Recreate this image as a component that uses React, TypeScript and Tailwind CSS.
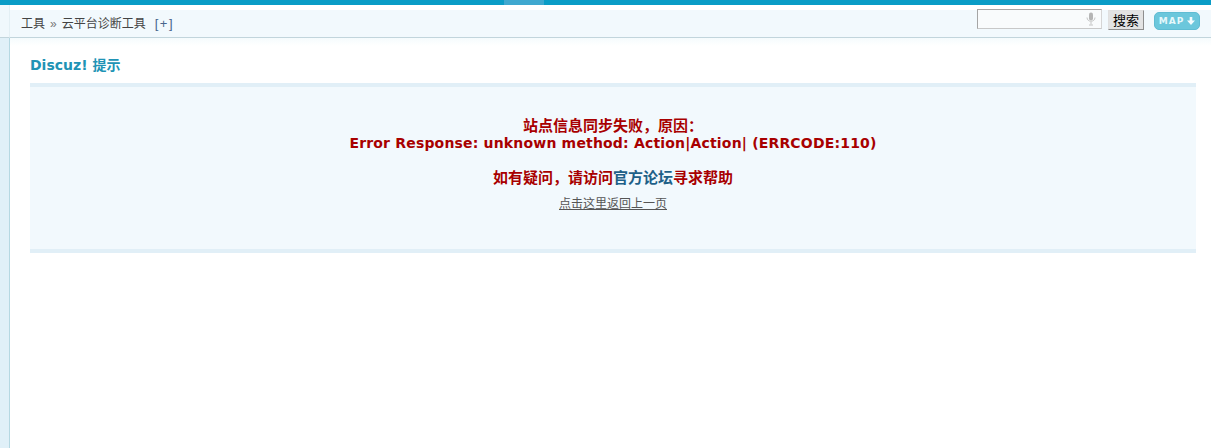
const sans = "font-['DejaVu_Sans','Noto_Sans_CJK_SC',sans-serif]";
const cjk = "font-['Liberation_Sans','Noto_Sans_CJK_SC',sans-serif]";

function MicIcon() {
  return (
    <svg width="10" height="14" viewBox="0 0 10 14" fill="none">
      <rect x="3" y="0.5" width="4" height="8" rx="2" fill="#b5b5b5" />
      <path d="M1 5.5c0 5 8 5 8 0" stroke="#c4c4c4" strokeWidth="1" />
      <path d="M5 10v2.5M3 13h4" stroke="#c4c4c4" strokeWidth="1" />
    </svg>
  );
}

export default function App() {
  return (
    <div className={`h-[448px] w-[1211px] overflow-hidden bg-white ${cjk}`}>
      {/* top bar */}
      <div className="flex h-[5px] bg-[#0a9cc6]">
        <div className="ml-[504px] w-[40px] bg-[#3fa8cf]" />
      </div>
      <div className="flex h-[443px]">
        {/* left strip */}
        <div className="flex w-[10px] shrink-0 flex-col">
          <div className="h-[33px] border-b border-r border-b-[#c2d5dc] border-r-[#e3eff4] bg-[#f0f8fc]" />
          <div className="flex-1 border-r border-[#b5d8e2] bg-[#e0f0f8]" />
        </div>
        <div className="min-w-0 flex-1">
          <div className="h-[5px] bg-white" />
          {/* breadcrumb bar */}
          <div className="flex h-[28px] items-center border-b border-[#c2d5dc] bg-[#f2f9fd] pl-[11px] pr-[11px]">
            <div className="flex items-center text-[12px] text-[#444]">
              <span>工具</span>
              <span className="mx-[5px] text-[#777]">»</span>
              <span>云平台诊断工具</span>
              <span className="ml-[9px] text-[13px] tracking-[1.5px] text-[#47648c]">[+]</span>
            </div>
            <div className="ml-auto flex items-start self-start -mt-[1px]">
              <div className="flex h-[20px] w-[125px] items-center justify-end border border-[#a5a5a5] border-b-[#c8c8c8] border-r-[#d5d5d5] bg-[#f9fbfc] pr-[5px]">
                <MicIcon />
              </div>
              <button className="ml-[6px] mt-[1px] h-[20px] w-[36px] border border-[#8e8e8e] border-l-[#e0e0e0] border-t-[#e0e0e0] bg-[#e3e3e3] text-[13px] leading-none text-black">
                搜索
              </button>
              <div className={`ml-[10px] mt-[3px] flex h-[18px] w-[46px] items-center justify-center rounded-[5px] border border-[#5fbcd3] bg-[#6bc7dc] text-[9px] font-bold leading-none tracking-[1px] text-[#e6f8fb] ${sans}`}>
                <span className="pt-[1px]">MAP</span>
                <svg className="ml-[3px]" width="8" height="8" viewBox="0 0 8 8">
                  <path d="M2.7 0h2.6v3.6H8L4 8 0 3.6h2.7z" fill="#f2fbfd" />
                </svg>
              </div>
            </div>
          </div>
          {/* content */}
          <div className="bg-gradient-to-b from-[#f5fbfd] to-white to-[8px] pl-[20px] pr-[15px] pt-[18px]">
            <h1 className={`text-[14px] font-bold leading-[18px] text-[#2093b5] ${sans}`}>Discuz! 提示</h1>
            <div className="mt-[9px] flex h-[170px] flex-col items-center border-y-[4px] border-[#e1eff7] bg-[#f2f9fd] pt-[31px]">
              <div className={`text-center text-[15px] font-bold leading-[17px] text-[#a80000] ${sans}`}>
                <p>站点信息同步失败，原因：</p>
                <p className="text-[14px] tracking-[0.18px]">Error Response: unknown method: Action|Action| (ERRCODE:110)</p>
                <p className="mt-[18px]">
                  如有疑问，请访问<a className="text-[#1e6088]">官方论坛</a>寻求帮助
                </p>
              </div>
              <a className="mt-[9px] text-[12px] leading-[16px] text-[#555] underline">点击这里返回上一页</a>
            </div>
          </div>
        </div>
      </div>
    </div>
  );
}
